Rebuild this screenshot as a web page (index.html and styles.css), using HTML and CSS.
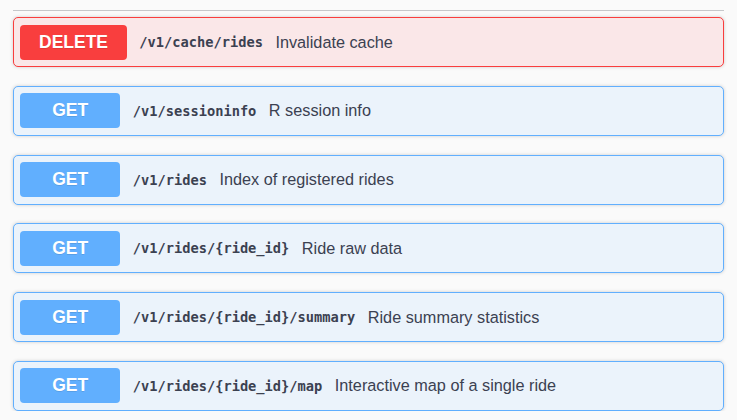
FILE: index.html
```html
<!DOCTYPE html>
<html>
<head>
<meta charset="utf-8">
<link rel="stylesheet" href="styles.css">
</head>
<body>
<div class="wrap">
  <div class="tag-line"></div>
  <div class="ops">
    <div class="op op-delete">
      <span class="method">DELETE</span>
      <span class="path">/v1/cache/rides</span>
      <span class="desc">Invalidate cache</span>
    </div>
    <div class="op op-get">
      <span class="method">GET</span>
      <span class="path">/v1/sessioninfo</span>
      <span class="desc">R session info</span>
    </div>
    <div class="op op-get">
      <span class="method">GET</span>
      <span class="path">/v1/rides</span>
      <span class="desc">Index of registered rides</span>
    </div>
    <div class="op op-get">
      <span class="method">GET</span>
      <span class="path">/v1/rides/{ride_id}</span>
      <span class="desc">Ride raw data</span>
    </div>
    <div class="op op-get">
      <span class="method">GET</span>
      <span class="path">/v1/rides/{ride_id}/summary</span>
      <span class="desc">Ride summary statistics</span>
    </div>
    <div class="op op-get">
      <span class="method">GET</span>
      <span class="path">/v1/rides/{ride_id}/map</span>
      <span class="desc">Interactive map of a single ride</span>
    </div>
  </div>
</div>
</body>
</html>
```
FILE: styles.css
```css
html, body {
  margin: 0;
  padding: 0;
  background: #fafafa;
  font-family: "Liberation Sans", Arial, sans-serif;
  color: #3b4151;
  overflow: hidden;
}
.wrap {
  padding: 9.5px 13px 0 13px;
}
.tag-line {
  height: 1.25px;
  background: #c6c7ca;
  margin-bottom: 6.25px;
}
.ops {
  display: flex;
  flex-direction: column;
  gap: 18.75px;
}
.op {
  display: flex;
  align-items: center;
  height: 50px;
  box-sizing: border-box;
  padding: 0 6.25px;
  border: 1.25px solid;
  border-radius: 5px;
  box-shadow: 0 0 3.75px rgba(0, 0, 0, 0.19);
}
.op-delete {
  background: #fae7e8;
  border-color: #f93e3e;
}
.op-get {
  background: #ebf3fb;
  border-color: #61affe;
}
.method {
  box-sizing: border-box;
  min-width: 100px;
  height: 35px;
  padding: 0 18.75px;
  border-radius: 4px;
  color: #fff;
  font-weight: 700;
  font-size: 17.5px;
  display: flex;
  align-items: center;
  justify-content: center;
  text-shadow: 0 1px 0 rgba(0, 0, 0, 0.1);
}
.op-delete .method { background: #f93e3e; }
.op-get .method { background: #61affe; }
.path {
  padding: 0 12.5px;
  font-family: "DejaVu Sans Mono", monospace;
  font-weight: 700;
  font-size: 13.7px;
  color: #3b4151;
}
.desc {
  font-size: 16.25px;
  color: #3b4151;
}
```
